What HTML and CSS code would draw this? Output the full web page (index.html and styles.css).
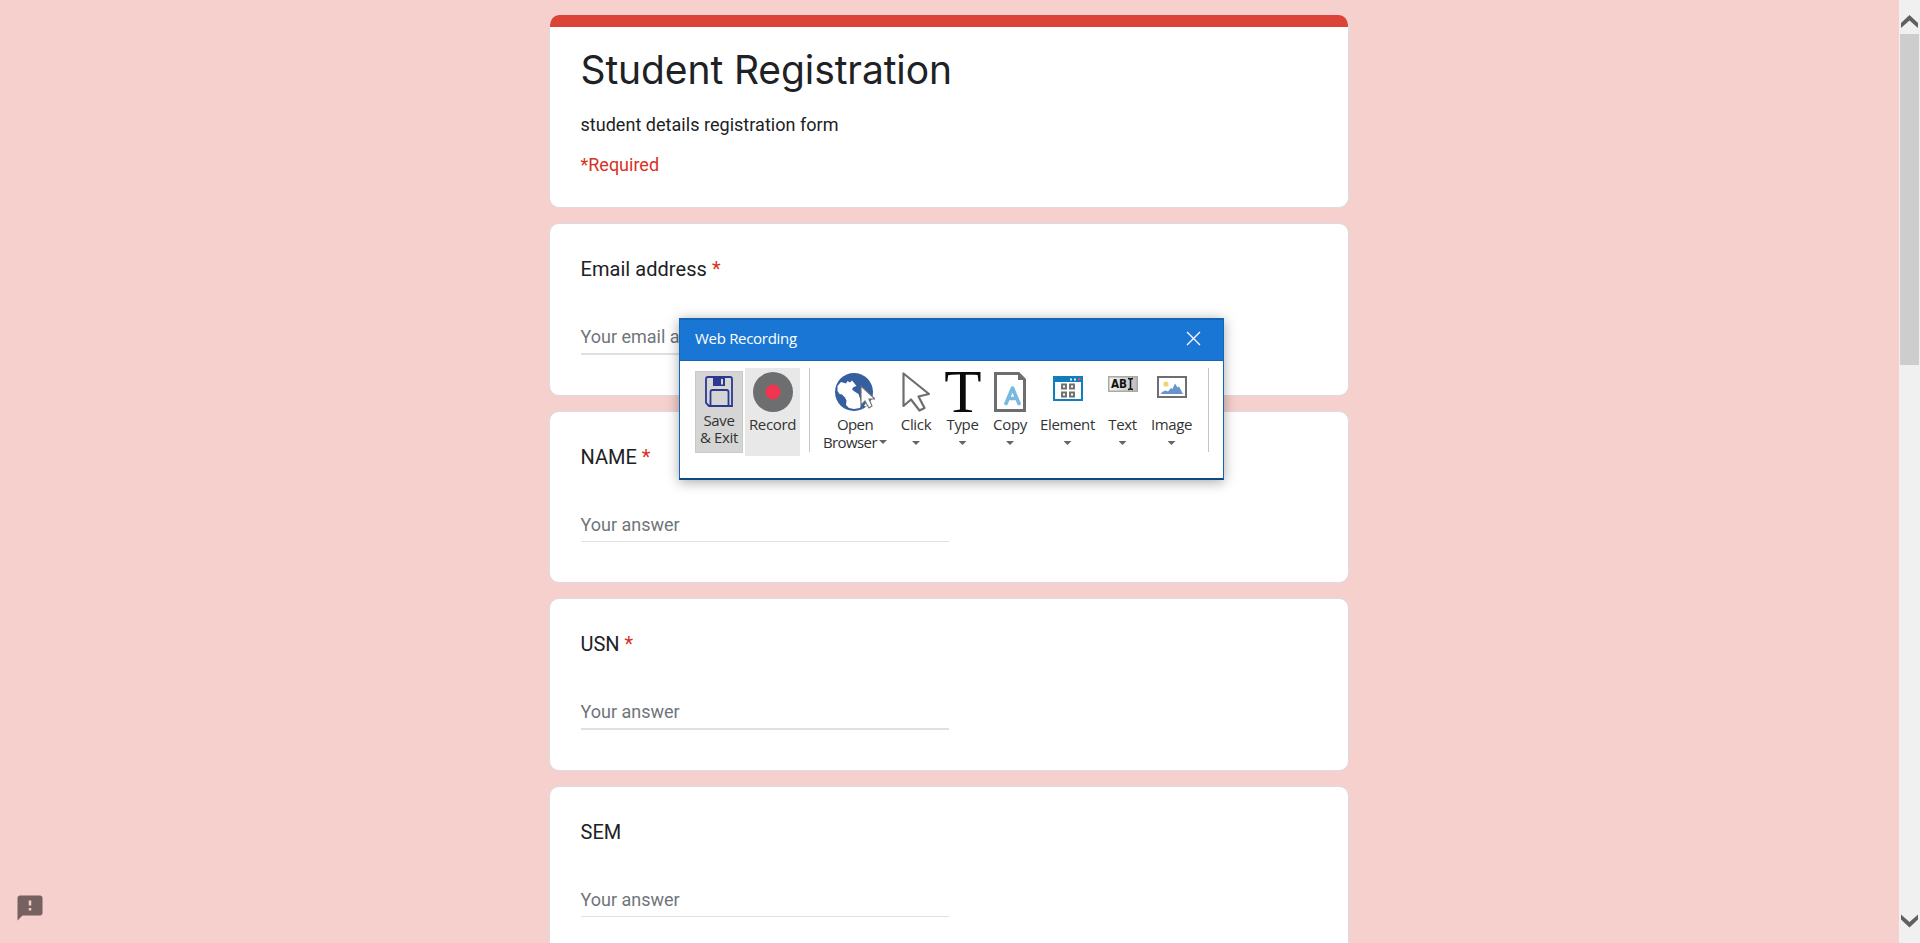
FILE: index.html
```html
<!DOCTYPE html>
<html lang="en">
<head>
<meta charset="utf-8">
<title>Student Registration</title>
<link rel="stylesheet" href="styles.css">
</head>
<body>
<div class="screen">
  <main class="page">
    <div class="form">
      <section class="card header">
        <div class="stripe"></div>
        <h1 class="title">Student Registration</h1>
        <p class="desc">student details registration form</p>
        <p class="required">*Required</p>
      </section>
      <section class="card question">
        <h2 class="label wide">Email address <span class="star">*</span></h2>
        <div class="answer thick">Your email address</div>
      </section>
      <section class="card question">
        <h2 class="label">NAME <span class="star">*</span></h2>
        <div class="answer">Your answer</div>
      </section>
      <section class="card question">
        <h2 class="label">USN <span class="star">*</span></h2>
        <div class="answer thick">Your answer</div>
      </section>
      <section class="card question">
        <h2 class="label">SEM</h2>
        <div class="answer">Your answer</div>
      </section>
    </div>
  </main>
  <aside class="scrollbar">
    <svg class="arrow" width="21" height="34" viewBox="0 0 21 34"><path d="M2 23 10.500 15 19 23V28L10.500 20.500 2 28Z" fill="#606060"/></svg>
    <div class="thumb"></div>
    <svg class="arrow arrow-down" width="21" height="34" viewBox="0 0 21 34"><path d="M2 5.500V10.500L10.500 18.500 19 10.500V5.500L10.500 13Z" fill="#606060"/></svg>
  </aside>

  <svg class="feedback" width="30" height="30" viewBox="0 0 24 24"><path fill="#75615f" d="M20 2H4c-1.100 0-2 .9-2 2v18l4-4h14c1.100 0 2-.9 2-2V4c0-1.100-.9-2-2-2zm-7 12h-2v-2h2v2zm0-4h-2V6h2v4z"/></svg>

  <div class="window">
    <div class="titlebar">
      <span class="caption">Web Recording</span>
      <svg class="close" width="15" height="15" viewBox="0 0 15 15"><path d="M1 1 14 14M14 1 1 14" stroke="#fff" stroke-width="1.300" fill="none"/></svg>
    </div>
    <div class="toolbar">
      <button class="tool save">
        <svg width="28" height="31" viewBox="0 0 28 31" fill="none" stroke="#2b3990" stroke-width="1.800"><path d="M1 3Q1 1 3 1H25Q27 1 27 3V30H4L1 27Z"/><path d="M8 1H20V10H8Z" fill="#2b3990" stroke="none"/><path d="M16 3H18V8.500H16Z" fill="#d5d5d5" stroke="none"/><path d="M5.500 30V16Q5.500 14 7.500 14H21.500Q23.500 14 23.500 16V30"/></svg>
        <span class="text">Save<br>&amp; Exit</span>
      </button>
      <button class="tool record">
        <svg width="40" height="40" viewBox="0 0 40 40"><circle cx="20" cy="20" r="20" fill="#6d6e70"/><circle cx="20" cy="20" r="7.500" fill="#f0364f"/></svg>
        <span class="text">Record</span>
      </button>
      <div class="sep"></div>
      <button class="tool browser">
        <svg width="40" height="40" viewBox="0 0 40 40"><circle cx="19" cy="20" r="19" fill="#355f9f"/><path d="M2.500 14 6 10 11 11.500 12.500 9 15 10.500 17 8.500 19.500 11.500 21.500 14 18.500 15 17 17.500 19.500 19.500 23.500 22 25.500 28 26 33 25 36 19 37 14 36 11 33 11.500 28.500 10 25.500 7 22.500 4.500 22 2.500 19ZM29 34 31 31 33 32 31 34.500Z" fill="#fff"/><path d="M26 14V33L30 29 34 36 37 34 34 27H40Z" fill="#fff" stroke="#6d6e70" stroke-width="1.100"/></svg>
        <span class="text tight">Open<br>Browser<i class="caret"></i></span>
      </button>
      <button class="tool click">
        <svg width="28" height="40" viewBox="0 0 28 40"><path d="M1.500 1.500V34L9 27.500 17.500 38.500 22.500 36 16.500 24.500 27 22Z" fill="#fff" stroke="#6d6e70" stroke-width="2.200" stroke-linejoin="round"/></svg>
        <span class="text">Click</span><i class="caret"></i>
      </button>
      <button class="tool type">
        <svg width="38" height="40" viewBox="0 0 38 40"><text x="19" y="40" text-anchor="middle" class="big-t">T</text></svg>
        <span class="text">Type</span><i class="caret"></i>
      </button>
      <button class="tool copy">
        <svg width="32" height="40" viewBox="0 0 32 40"><path d="M1.500 1.500H24.500L30.500 7.500V38.500H1.500Z" fill="#fff" stroke="#6d6e70" stroke-width="3"/><path d="M24 1V8H31Z" fill="#6d6e70"/><path d="M12 31.500 18.500 16 25 31.500M14 26.500H23" fill="none" stroke="#78b9e2" stroke-width="3.600" stroke-linejoin="round" stroke-linecap="round"/></svg>
        <span class="text">Copy</span><i class="caret"></i>
      </button>
      <button class="tool element">
        <svg width="30" height="40" viewBox="0 0 30 40"><rect x="1" y="5" width="28" height="23" fill="#fff" stroke="#117dbb" stroke-width="2"/><path d="M0 4H30V10H0Z" fill="#117dbb"/><path d="M17 6.500H19V8.500H17ZM21 6.500H23V8.500H21Z" fill="#d8f0fa"/><path d="M25 6H27.500V8.500H25Z" fill="#ef4b64"/><path d="M9 12.500H13V16.500H9ZM17 12.500H21V16.500H17ZM9 20.500H13V24.500H9ZM17 20.500H21V24.500H17Z" fill="#fff" stroke="#6d6e70" stroke-width="1.900"/></svg>
        <span class="text">Element</span><i class="caret"></i>
      </button>
      <button class="tool words">
        <svg width="30" height="40" viewBox="0 0 30 40"><defs><linearGradient id="field"><stop stop-color="#f4f4f4"/><stop offset="1" stop-color="#bdbdbd"/></linearGradient></defs><rect x=".75" y="4.750" width="28.500" height="14.500" fill="url(#field)" stroke="#aaaaa3" stroke-width="1.500"/><text x="3" y="16" class="abi" textLength="16" lengthAdjust="spacingAndGlyphs">AB</text><path d="M20 6.500Q22.500 6.500 22.500 8V16Q22.500 17.500 20 17.500M25 6.500Q22.500 6.500 22.500 8M25 17.500Q22.500 17.500 22.500 16" fill="none" stroke="#111" stroke-width="1.500"/></svg>
        <span class="text">Text</span><i class="caret"></i>
      </button>
      <button class="tool image">
        <svg width="30" height="40" viewBox="0 0 30 40"><rect x="1" y="5" width="28" height="20" fill="#fff" stroke="#6d6e70" stroke-width="2"/><circle cx="9" cy="12" r="2.600" fill="#f0d470"/><path d="M4 22 5 20 8.500 18.500 11 19.500 14 16 15.500 17 18 11.500 20.500 15.500 22 14.500 26 22Z" fill="#6794cd"/></svg>
        <span class="text">Image</span><i class="caret"></i>
      </button>
      <div class="sep"></div>
    </div>
  </div>
</div>
</body>
</html>
```

FILE: styles.css
```css
* { box-sizing: border-box; }
body { margin: 0; background: #f6d0cd; font-family: Roboto, sans-serif; }
.screen { display: flex; height: 943px; overflow: hidden; position: relative; }
.page { flex: 1; display: flex; justify-content: center; align-items: flex-start; padding: 15px 1px 0 0; }
.form { width: 800px; display: flex; flex-direction: column; gap: 15px; }
.card { background: #fff; border: 1px solid #dadce0; border-radius: 10px; padding: 0 30.500px; overflow: hidden; }
.header { height: 193px; border-top: 0; }
.stripe { height: 12px; margin: 0 -32px; background: #db4437; }
.title { margin: 18px 0 0; font: 400 39px/50px Inter, sans-serif; letter-spacing: -0.1px; color: #202124; white-space: nowrap; }
.desc { margin: 17px 0 0; font-size: 18px; line-height: 26px; letter-spacing: 0.03px; color: #202124; }
.required { margin: 14px 0 0; font-size: 18px; line-height: 26px; color: #d93025; }
.question { height: 172.700px; flex: none; padding-top: 30px; }
.label { margin: 0; font-weight: 400; font-size: 20px; line-height: 30px; color: #202124; }
.wide { letter-spacing: 0.05px; }
.star { color: #d93025; }
.answer { width: 368px; height: 42px; margin-top: 28px; padding-top: 12px; font-size: 18px; line-height: 26px; color: #70757a; border-bottom: 1px solid #e0e0e0; }
.thick { height: 43px; border-bottom-width: 2px; }

.scrollbar { width: 21px; background: #f0f0f0; display: flex; flex-direction: column; }
.arrow { display: block; }
.thumb { height: 331px; margin: 0 1px; background: #cdcdcd; }
.arrow-down { margin-top: auto; }
.feedback { position: absolute; left: 15px; top: 893px; }

.window { position: absolute; left: 679px; top: 318px; width: 545px; height: 162px; background: #fff; border: 1px solid #1565b4; border-bottom: 2px solid #0d4a85; box-shadow: 0 2px 12px rgba(0,0,0,.35); font-family: "Open Sans", sans-serif; }
.titlebar { height: 42px; background: #1a76d4; border-top: 1px solid #1565b4; border-bottom: 1px solid #1565b4; display: flex; align-items: center; justify-content: space-between; padding: 0 22px 4px 15px; }
.caption { color: #fff; font-size: 15px; line-height: 20px; letter-spacing: -0.3px; }
.close { display: block; }
.toolbar { display: flex; align-items: flex-start; padding: 7px 0 0 15px; }
.tool { height: 88px; border: 0; background: none; padding: 4px 0 0; margin: 0; display: flex; flex-direction: column; align-items: center; font-family: inherit; color: #333; flex: none; }
.tool svg { display: block; flex: none; }
.text { font-size: 15px; line-height: 18px; margin-top: 3px; letter-spacing: -0.35px; white-space: nowrap; text-align: center; }
.tight { letter-spacing: -0.6px; }
.save { width: 48px; height: 82px; margin-top: 3px; background: #d5d5d5; border: 1px solid #c9c9c9; }
.save .text { line-height: 17px; margin-top: 5px; }
.record { width: 55px; margin-left: 2px; background: #e8e8e8; }
.sep { width: 1px; height: 84px; background: #c4c4c4; margin-left: 9px; flex: none; }
.browser { width: 82px; margin-left: 4px; }
.click { width: 40px; }
.type { width: 53px; }
.copy { width: 42px; }
.element { width: 73px; }
.words { width: 37px; }
.image { width: 61px; }
.image + .sep { margin-left: 6px; }
.caret { width: 8px; height: 4px; margin-top: 8px; background: #666; clip-path: polygon(0 0, 100% 0, 50% 100%); }
.text .caret { display: inline-block; margin: 0 0 4px 2px; }
.big-t { font: 61px "Liberation Serif", serif; fill: #0a0c0c; }
.abi { font: bold 12px "DejaVu Sans", sans-serif; fill: #111; }
```
